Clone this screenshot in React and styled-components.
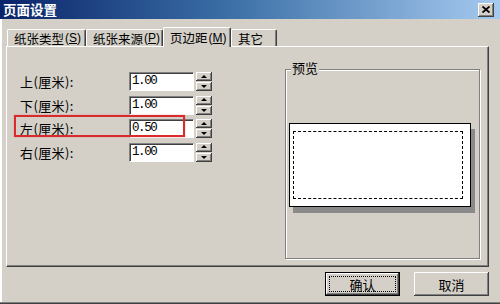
import React from "react";
import styled, { createGlobalStyle, css } from "styled-components";

const Global = createGlobalStyle`
  html, body { margin: 0; padding: 0; width: 500px; height: 304px; overflow: hidden; background: #d4d0c8; }
  * { box-sizing: border-box; }
  body { font-family: "Noto Sans CJK SC", "Noto Sans", sans-serif; }
`;

const raised = css`
  box-shadow: inset -1px -1px 0 #404040, inset 1px 1px 0 #ffffff, inset -2px -2px 0 #808080;
`;

const Window = styled.div`
  width: 500px;
  height: 304px;
  display: flex;
  flex-direction: column;
  background: #d4d0c8;
  border-bottom: 1px solid #404040;
  box-shadow: inset 0 -1px 0 #808080, inset 2px 0 0 #ffffff;
`;

const TitleBar = styled.div`
  height: 19px;
  flex: none;
  display: flex;
  align-items: center;
  justify-content: space-between;
  padding: 0 6px 0 3px;
  background: linear-gradient(to right, #0a246a 0%, #3a6ea5 45%, #a6caf0 100%);
`;

const TitleText = styled.span`
  color: #ffffff;
  font-weight: 700;
  font-size: 13.5px;
  line-height: 19px;
`;

const CloseButton = styled.div`
  width: 16px;
  height: 14px;
  background: #d4d0c8;
  display: flex;
  align-items: center;
  justify-content: center;
  ${raised}
`;

const Body = styled.div`
  flex: 1;
  display: flex;
  flex-direction: column;
  padding: 8px 11px 0 6px;
`;

const TabStrip = styled.div`
  display: flex;
  align-items: flex-end;
  height: 19px;
  padding-left: 1px;
  position: relative;
  z-index: 1;
`;

const Tab = styled.div`
  width: ${(p) => p.$w}px;
  height: ${(p) => (p.$active ? 20 : 17)}px;
  margin-bottom: ${(p) => (p.$active ? -1 : 0)}px;
  display: flex;
  align-items: center;
  padding-left: 6px;
  font-size: 12.5px;
  color: #000;
  background: #d4d0c8;
  border-top: 1px solid #ffffff;
  border-left: 1px solid #ffffff;
  border-right: 1px solid #404040;
  border-top-left-radius: 2px;
  border-top-right-radius: 2px;
  box-shadow: inset -1px 0 0 #808080;
  white-space: nowrap;
  overflow: visible;
  u { text-decoration: underline; text-underline-offset: 1px; }
`;

const Paren = styled.span`
  font-family: "Liberation Sans", sans-serif;
  font-size: 12px;
  margin-left: 1px;
`;

const Panel = styled.div`
  height: 221px;
  display: flex;
  align-items: flex-start;
  padding: 22px 8px 0 13px;
  border-top: 1px solid #ffffff;
  border-left: 1px solid #ffffff;
  border-right: 1px solid #404040;
  border-bottom: 1px solid #404040;
  box-shadow: inset -1px -1px 0 #808080;
`;

const Form = styled.div`
  margin-top: 3px;
  display: flex;
  flex-direction: column;
  gap: 4.5px;
`;

const Row = styled.div`
  position: relative;
  display: flex;
  align-items: center;
  height: 19px;
`;

const Label = styled.span`
  width: 109px;
  font-size: 13px;
  letter-spacing: 0.4px;
  color: #000;
`;

const Input = styled.div`
  width: 65px;
  height: 19px;
  background: #ffffff;
  border-top: 1px solid #808080;
  border-left: 1px solid #808080;
  border-right: 1px solid #ffffff;
  border-bottom: 1px solid #ffffff;
  box-shadow: inset 1px 1px 0 #404040;
  padding-left: 2px;
  font-family: "Liberation Mono", "DejaVu Sans Mono", monospace;
  font-size: 12.5px;
  letter-spacing: -1.4px;
  line-height: 17px;
  color: #000;
`;

const Spinner = styled.div`
  margin-left: 2px;
  width: 16px;
  height: 19px;
  display: flex;
  flex-direction: column;
  gap: 1px;
`;

const SpinBtn = styled.div`
  flex: 1;
  background: #d4d0c8;
  display: flex;
  align-items: center;
  justify-content: center;
  ${raised}
  &::after {
    content: "";
    width: 0;
    height: 0;
    border-left: 3px solid transparent;
    border-right: 3px solid transparent;
    ${(p) =>
      p.$dir === "up"
        ? "border-bottom: 3px solid #000; margin-top: -1px;"
        : "border-top: 3px solid #000; margin-top: 0;"}
  }
`;

const Highlight = styled.div`
  position: absolute;
  left: -6px;
  top: -4px;
  width: 171px;
  height: 22px;
  border: 2px solid #d92b2b;
  box-shadow: 0 0 1px rgba(217, 43, 43, 0.6);
  pointer-events: none;
`;

const GroupBox = styled.div`
  position: relative;
  margin-left: auto;
  width: 195px;
  height: 190px;
  border: 1px solid #808080;
  box-shadow: inset 1px 1px 0 #ffffff, 1px 1px 0 #ffffff;
  padding: 53px 0 0 3px;
`;

const Legend = styled.span`
  position: absolute;
  top: -10px;
  left: 5px;
  padding: 0 1px;
  background: #d4d0c8;
  font-size: 13px;
  line-height: 16px;
  color: #000;
`;

const Paper = styled.div`
  width: 182px;
  height: 84px;
  background: #ffffff;
  border: 1.5px solid #000;
  box-shadow: 4px 6px 0 #8a8a8a;
  padding: 7px 7px 7px 3px;
`;

const MarginBox = styled.div`
  width: 100%;
  height: 100%;
  border: 1px dashed #000;
`;

const ButtonBar = styled.div`
  display: flex;
  justify-content: flex-end;
  gap: 14px;
  margin-top: 5px;
`;

const Button = styled.div`
  width: 75px;
  height: 24px;
  display: flex;
  align-items: center;
  justify-content: center;
  font-size: 13px;
  color: #000;
  background: #d4d0c8;
  ${(p) =>
    p.$default
      ? css`
          border: 1px solid #000;
          padding: 3px;
          ${raised}
        `
      : raised}
`;

const FocusRing = styled.span`
  flex: 1;
  align-self: stretch;
  display: flex;
  align-items: center;
  justify-content: center;
  border: 1px dotted #000;
`;

const rows = [
  { label: "上(厘米):", value: "1.00" },
  { label: "下(厘米):", value: "1.00" },
  { label: "左(厘米):", value: "0.50", mark: true },
  { label: "右(厘米):", value: "1.00" },
];

const tabs = [
  { text: "纸张类型", key: "S", w: 79 },
  { text: "纸张来源", key: "P", w: 77 },
  { text: "页边距", key: "M", w: 68, active: true },
  { text: "其它", w: 46 },
];

export default function App() {
  return (
    <>
      <Global />
      <Window>
        <TitleBar>
          <TitleText>页面设置</TitleText>
          <CloseButton>
            <svg width="8" height="7" viewBox="0 0 8 7">
              <path d="M0.5 0.5 L7.5 6.5 M7.5 0.5 L0.5 6.5" stroke="#000" strokeWidth="1.8" />
            </svg>
          </CloseButton>
        </TitleBar>
        <Body>
          <TabStrip>
            {tabs.map((t) => (
              <Tab key={t.text} $w={t.w} $active={t.active}>
                {t.text}
                {t.key && (
                  <Paren>
                    (<u>{t.key}</u>)
                  </Paren>
                )}
              </Tab>
            ))}
          </TabStrip>
          <Panel>
            <Form>
              {rows.map((r) => (
                <Row key={r.label}>
                  <Label>{r.label}</Label>
                  <Input>{r.value}</Input>
                  <Spinner>
                    <SpinBtn $dir="up" />
                    <SpinBtn $dir="down" />
                  </Spinner>
                  {r.mark && <Highlight />}
                </Row>
              ))}
            </Form>
            <GroupBox>
              <Legend>预览</Legend>
              <Paper>
                <MarginBox />
              </Paper>
            </GroupBox>
          </Panel>
          <ButtonBar>
            <Button $default>
              <FocusRing>确认</FocusRing>
            </Button>
            <Button>取消</Button>
          </ButtonBar>
        </Body>
      </Window>
    </>
  );
}
